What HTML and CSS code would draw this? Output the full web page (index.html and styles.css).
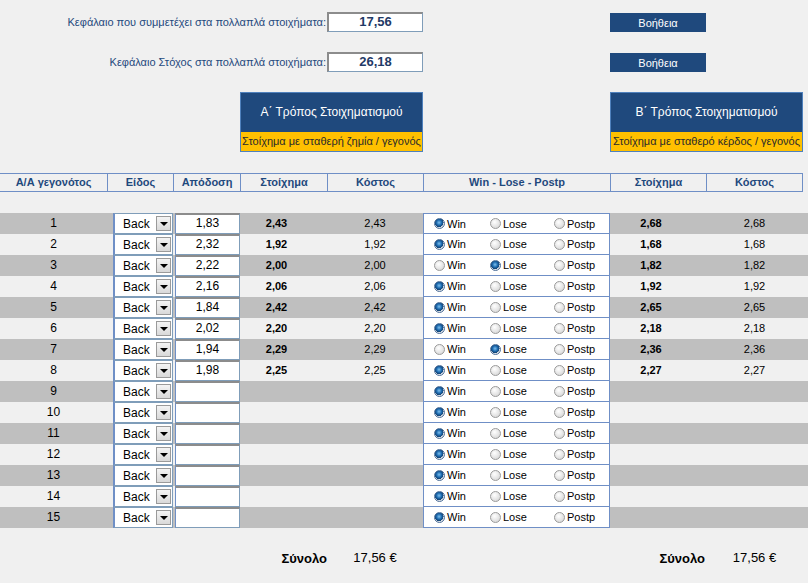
FILE: index.html
```html
<!DOCTYPE html>
<html lang="el">
<head>
<meta charset="utf-8">
<title>Πολλαπλά στοιχήματα</title>
<link rel="stylesheet" href="styles.css">
</head>
<body>
<div class="page">
  <div class="grid top">
    <div class="label">Κεφάλαιο που συμμετέχει στα πολλαπλά στοιχήματα:</div>
    <div class="field">17,56</div>
    <div class="help">Βοήθεια</div>

    <div class="label">Κεφάλαιο Στόχος στα πολλαπλά στοιχήματα:</div>
    <div class="field">26,18</div>
    <div class="help">Βοήθεια</div>

    <div class="mode mode-a">
      <div class="mode-title">Α΄ Τρόπος Στοιχηματισμού</div>
      <div class="mode-sub">Στοίχημα με σταθερή ζημία / γεγονός</div>
    </div>
    <div class="mode mode-b">
      <div class="mode-title">Β΄ Τρόπος Στοιχηματισμού</div>
      <div class="mode-sub">Στοίχημα με σταθερό κέρδος / γεγονός</div>
    </div>
  </div>

  <div class="grid head">
    <div class="hc first-hc">Α/Α γεγονότος</div>
    <div class="hc">Είδος</div>
    <div class="hc">Απόδοση</div>
    <div class="hc">Στοίχημα</div>
    <div class="hc">Κόστος</div>
    <div class="hc">Win - Lose - Postp</div>
    <div class="hc">Στοίχημα</div>
    <div class="hc last-hc">Κόστος</div>
  </div>

  <div class="rows">
    <div class="row odd first"><div class="grid">
      <div class="num">1</div>
      <div class="sel"><span>Back</span><i class="drop"></i></div>
      <div class="odds">1,83</div>
      <div class="stake">2,43</div><div class="cost">2,43</div>
      <div class="wlp"><span class="opt"><i class="rb on"></i>Win</span><span class="opt"><i class="rb"></i>Lose</span><span class="opt"><i class="rb"></i>Postp</span></div>
      <div class="stake">2,68</div><div class="cost">2,68</div>
    </div></div>
    <div class="row"><div class="grid">
      <div class="num">2</div>
      <div class="sel"><span>Back</span><i class="drop"></i></div>
      <div class="odds">2,32</div>
      <div class="stake">1,92</div><div class="cost">1,92</div>
      <div class="wlp"><span class="opt"><i class="rb on"></i>Win</span><span class="opt"><i class="rb"></i>Lose</span><span class="opt"><i class="rb"></i>Postp</span></div>
      <div class="stake">1,68</div><div class="cost">1,68</div>
    </div></div>
    <div class="row odd"><div class="grid">
      <div class="num">3</div>
      <div class="sel"><span>Back</span><i class="drop"></i></div>
      <div class="odds">2,22</div>
      <div class="stake">2,00</div><div class="cost">2,00</div>
      <div class="wlp"><span class="opt"><i class="rb"></i>Win</span><span class="opt"><i class="rb on"></i>Lose</span><span class="opt"><i class="rb"></i>Postp</span></div>
      <div class="stake">1,82</div><div class="cost">1,82</div>
    </div></div>
    <div class="row"><div class="grid">
      <div class="num">4</div>
      <div class="sel"><span>Back</span><i class="drop"></i></div>
      <div class="odds">2,16</div>
      <div class="stake">2,06</div><div class="cost">2,06</div>
      <div class="wlp"><span class="opt"><i class="rb on"></i>Win</span><span class="opt"><i class="rb"></i>Lose</span><span class="opt"><i class="rb"></i>Postp</span></div>
      <div class="stake">1,92</div><div class="cost">1,92</div>
    </div></div>
    <div class="row odd"><div class="grid">
      <div class="num">5</div>
      <div class="sel"><span>Back</span><i class="drop"></i></div>
      <div class="odds">1,84</div>
      <div class="stake">2,42</div><div class="cost">2,42</div>
      <div class="wlp"><span class="opt"><i class="rb on"></i>Win</span><span class="opt"><i class="rb"></i>Lose</span><span class="opt"><i class="rb"></i>Postp</span></div>
      <div class="stake">2,65</div><div class="cost">2,65</div>
    </div></div>
    <div class="row"><div class="grid">
      <div class="num">6</div>
      <div class="sel"><span>Back</span><i class="drop"></i></div>
      <div class="odds">2,02</div>
      <div class="stake">2,20</div><div class="cost">2,20</div>
      <div class="wlp"><span class="opt"><i class="rb on"></i>Win</span><span class="opt"><i class="rb"></i>Lose</span><span class="opt"><i class="rb"></i>Postp</span></div>
      <div class="stake">2,18</div><div class="cost">2,18</div>
    </div></div>
    <div class="row odd"><div class="grid">
      <div class="num">7</div>
      <div class="sel"><span>Back</span><i class="drop"></i></div>
      <div class="odds">1,94</div>
      <div class="stake">2,29</div><div class="cost">2,29</div>
      <div class="wlp"><span class="opt"><i class="rb"></i>Win</span><span class="opt"><i class="rb on"></i>Lose</span><span class="opt"><i class="rb"></i>Postp</span></div>
      <div class="stake">2,36</div><div class="cost">2,36</div>
    </div></div>
    <div class="row"><div class="grid">
      <div class="num">8</div>
      <div class="sel"><span>Back</span><i class="drop"></i></div>
      <div class="odds">1,98</div>
      <div class="stake">2,25</div><div class="cost">2,25</div>
      <div class="wlp"><span class="opt"><i class="rb on"></i>Win</span><span class="opt"><i class="rb"></i>Lose</span><span class="opt"><i class="rb"></i>Postp</span></div>
      <div class="stake">2,27</div><div class="cost">2,27</div>
    </div></div>
    <div class="row odd"><div class="grid">
      <div class="num">9</div>
      <div class="sel"><span>Back</span><i class="drop"></i></div>
      <div class="odds"></div>
      <div class="stake"></div><div class="cost"></div>
      <div class="wlp"><span class="opt"><i class="rb on"></i>Win</span><span class="opt"><i class="rb"></i>Lose</span><span class="opt"><i class="rb"></i>Postp</span></div>
      <div class="stake"></div><div class="cost"></div>
    </div></div>
    <div class="row"><div class="grid">
      <div class="num">10</div>
      <div class="sel"><span>Back</span><i class="drop"></i></div>
      <div class="odds"></div>
      <div class="stake"></div><div class="cost"></div>
      <div class="wlp"><span class="opt"><i class="rb on"></i>Win</span><span class="opt"><i class="rb"></i>Lose</span><span class="opt"><i class="rb"></i>Postp</span></div>
      <div class="stake"></div><div class="cost"></div>
    </div></div>
    <div class="row odd"><div class="grid">
      <div class="num">11</div>
      <div class="sel"><span>Back</span><i class="drop"></i></div>
      <div class="odds"></div>
      <div class="stake"></div><div class="cost"></div>
      <div class="wlp"><span class="opt"><i class="rb on"></i>Win</span><span class="opt"><i class="rb"></i>Lose</span><span class="opt"><i class="rb"></i>Postp</span></div>
      <div class="stake"></div><div class="cost"></div>
    </div></div>
    <div class="row"><div class="grid">
      <div class="num">12</div>
      <div class="sel"><span>Back</span><i class="drop"></i></div>
      <div class="odds"></div>
      <div class="stake"></div><div class="cost"></div>
      <div class="wlp"><span class="opt"><i class="rb on"></i>Win</span><span class="opt"><i class="rb"></i>Lose</span><span class="opt"><i class="rb"></i>Postp</span></div>
      <div class="stake"></div><div class="cost"></div>
    </div></div>
    <div class="row odd"><div class="grid">
      <div class="num">13</div>
      <div class="sel"><span>Back</span><i class="drop"></i></div>
      <div class="odds"></div>
      <div class="stake"></div><div class="cost"></div>
      <div class="wlp"><span class="opt"><i class="rb on"></i>Win</span><span class="opt"><i class="rb"></i>Lose</span><span class="opt"><i class="rb"></i>Postp</span></div>
      <div class="stake"></div><div class="cost"></div>
    </div></div>
    <div class="row"><div class="grid">
      <div class="num">14</div>
      <div class="sel"><span>Back</span><i class="drop"></i></div>
      <div class="odds"></div>
      <div class="stake"></div><div class="cost"></div>
      <div class="wlp"><span class="opt"><i class="rb on"></i>Win</span><span class="opt"><i class="rb"></i>Lose</span><span class="opt"><i class="rb"></i>Postp</span></div>
      <div class="stake"></div><div class="cost"></div>
    </div></div>
    <div class="row odd"><div class="grid">
      <div class="num">15</div>
      <div class="sel"><span>Back</span><i class="drop"></i></div>
      <div class="odds"></div>
      <div class="stake"></div><div class="cost"></div>
      <div class="wlp"><span class="opt"><i class="rb on"></i>Win</span><span class="opt"><i class="rb"></i>Lose</span><span class="opt"><i class="rb"></i>Postp</span></div>
      <div class="stake"></div><div class="cost"></div>
    </div></div>
  </div>

  <div class="grid totals">
    <div class="tot-label tl-a">Σύνολο</div>
    <div class="tot-val tv-a">17,56 €</div>
    <div class="tot-label tl-b">Σύνολο</div>
    <div class="tot-val tv-b">17,56 €</div>
  </div>
</div>
</body>
</html>
```

FILE: styles.css
```css
html, body {
  margin: 0;
  padding: 0;
  background: #f0f0f0;
}
body {
  font-family: "Liberation Sans", Arial, sans-serif;
  font-size: 11px;
  color: #000;
  width: 808px;
  height: 583px;
  overflow: hidden;
}
.page {
  width: 808px;
}
.grid {
  display: grid;
  grid-template-columns: 107px 66px 67px 87px 96px 187px 96px 97px;
}

/* top section */
.top {
  padding-top: 12px;
  grid-template-rows: 20px 20px 60px;
  row-gap: 20px;
}
.label {
  grid-column: 1 / 5;
  text-align: right;
  color: #1f497d;
  font-size: 11px;
  line-height: 20px;
  padding-right: 1px;
}
.field {
  grid-column: 5;
  box-sizing: border-box;
  background: #fff;
  border: 1px solid #7f9db9;
  border-top: 2px solid #8c8c8c;
  border-left: 2px solid #8c8c8c;
  text-align: center;
  font-weight: bold;
  font-size: 13px;
  line-height: 16px;
  color: #1f3a66;
}
.help {
  grid-column: 7;
  margin-top: 1px;
  background: #1f497d;
  color: #fff;
  text-align: center;
  line-height: 20px;
  font-size: 11px;
}
.mode {
  box-sizing: border-box;
  border: 1px solid #4f81bd;
  display: flex;
  flex-direction: column;
}
.mode-a { grid-column: 4 / 6; }
.mode-b { grid-column: 7 / 9; }
.mode-title {
  flex: 0 0 39px;
  background: #1f497d;
  color: #fff;
  font-size: 12px;
  line-height: 39px;
  text-align: center;
}
.mode-sub {
  flex: 1;
  background: #ffc000;
  color: #2a2a2a;
  font-size: 11px;
  line-height: 19px;
  text-align: center;
  white-space: nowrap;
}

/* header */
.head {
  margin-top: 21px;
  width: 803px;
  box-sizing: border-box;
  border-top: 1px solid #6f8fc6;
  border-bottom: 1px solid #6f8fc6;
}
.hc {
  border-left: 1px solid #6f8fc6;
  text-align: center;
  font-weight: bold;
  color: #1f497d;
  font-size: 11px;
  line-height: 17px;
}
.first-hc { border-left: none; }
.last-hc { border-right: 1px solid #6f8fc6; }

/* rows */
.rows {
  margin-top: 21px;
}
.row {
  height: 21px;
}
.row.odd {
  background: #bfbfbf;
}
.row .grid {
  height: 21px;
}
.num, .stake, .cost {
  text-align: center;
  line-height: 21px;
  font-size: 12px;
}
.stake {
  font-weight: bold;
  font-size: 11px;
  padding-right: 14px;
}
.cost {
  font-size: 11px;
}
.sel {
  margin-left: 6px;
  box-sizing: border-box;
  height: 21px;
  background: #fff;
  border: 1px solid #7f9db9;
  border-left: 2px solid #6f8fc6;
  display: flex;
  align-items: center;
  padding-left: 8px;
  font-size: 12px;
}
.sel span {
  flex: 1;
}
.drop {
  width: 15px;
  height: 15px;
  margin-right: 1px;
  box-sizing: border-box;
  border: 1px solid #9a9a9a;
  background: linear-gradient(#f4f4f4, #d9d9d9);
  position: relative;
}
.drop::after {
  content: "";
  position: absolute;
  left: 3px;
  top: 5px;
  border-left: 4px solid transparent;
  border-right: 4px solid transparent;
  border-top: 4px solid #000;
}
.odds {
  margin-left: 2px;
  box-sizing: border-box;
  height: 21px;
  background: #fff;
  border: 1px solid #7f9db9;
  border-top: 2px solid #8c8c8c;
  border-left: 1px solid #6f8fc6;
  text-align: center;
  font-size: 12px;
  line-height: 17px;
}
.wlp {
  box-sizing: border-box;
  height: 21px;
  background: #fff;
  border-left: 1px solid #6f8fc6;
  border-right: 1px solid #6f8fc6;
  border-bottom: 1px solid #6f8fc6;
  display: grid;
  grid-template-columns: 56px 64px 1fr;
  padding-left: 10px;
  align-items: center;
  font-size: 11px;
}
.first .wlp {
  border-top: 1px solid #6f8fc6;
}
.opt {
  display: flex;
  align-items: center;
}
.rb {
  width: 11px;
  height: 11px;
  box-sizing: border-box;
  border-radius: 50%;
  border: 1px solid #9a9a9a;
  background: radial-gradient(circle at 40% 35%, #ffffff, #e2e2e2 60%, #cfcfcf);
  margin-right: 2px;
}
.rb.on {
  border-color: #4d6f99;
  background: radial-gradient(circle at 45% 40%, #7fc0ee 0, #1d6bb0 35%, #123f6e 60%, #d8dde4 62%, #eef0f2 100%);
}

/* totals */
.totals {
  margin-top: 20px;
  height: 20px;
  align-items: center;
  font-size: 13px;
}
.tot-label {
  font-weight: bold;
  text-align: right;
}
.tot-val {
  text-align: center;
  padding-top: 0;
  position: relative;
  top: -1px;
}
.tl-a { grid-column: 4; }
.tv-a { grid-column: 5; }
.tl-b { grid-column: 7; padding-right: 1px; }
.tv-b { grid-column: 8; }
```
